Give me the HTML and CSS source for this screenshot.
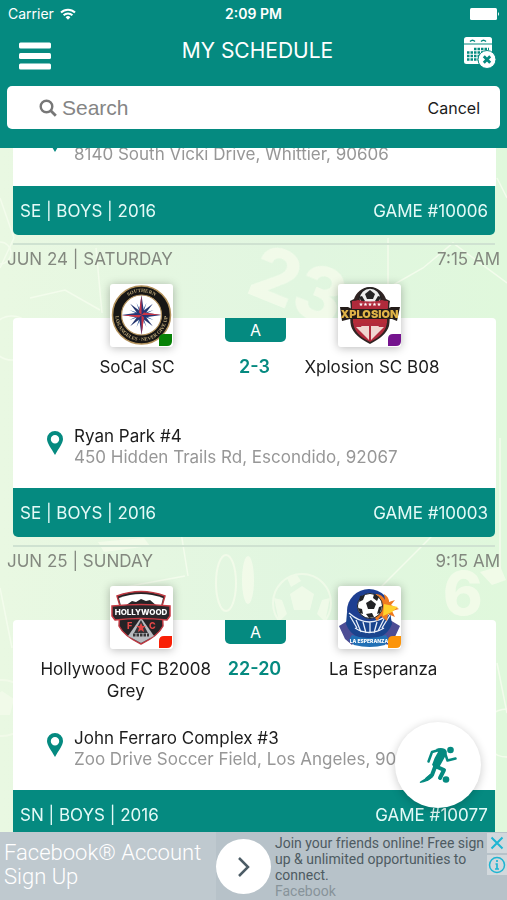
FILE: index.html
```html
<!DOCTYPE html>
<html lang="en">
<head>
<meta charset="utf-8">
<meta name="viewport" content="width=device-width, initial-scale=1">
<title>My Schedule</title>
<link rel="stylesheet" href="styles.css">
</head>
<body>
<header class="header">
  <div class="status">
    <div class="carrier">Carrier
      <svg width="16" height="12" viewBox="0 0 16 12" aria-hidden="true"><g fill="none" stroke="#fff" stroke-width="2"><path d="M1 4.5a10 10 0 0 1 14 0"/><path d="M3.6 7.3a6.2 6.2 0 0 1 8.8 0"/></g><path d="M5.6 9.2a3.4 3.4 0 0 1 4.8 0L8 11.8z" fill="#fff"/></svg>
    </div>
    <div class="clock">2:09 PM</div>
    <div class="battery"><svg width="30" height="12" viewBox="0 0 30 12" aria-hidden="true"><rect width="27" height="12" rx="1.5" fill="#fff"/><path d="M28 4q2 2 0 4z" fill="#fff"/></svg></div>
  </div>
  <div class="titlebar">
    <button class="icon-button" type="button" aria-label="Menu"><svg width="32" height="28" viewBox="0 0 32 28"><g fill="#fff"><rect y="0.5" width="32" height="6" rx="1.5"/><rect y="11" width="32" height="6" rx="1.5"/><rect y="21.500" width="32" height="6" rx="1.5"/></g></svg></button>
    <h1 class="title">MY SCHEDULE</h1>
    <button class="icon-button icon-button--end" type="button" aria-label="Clear calendar">
      <svg width="32" height="32" viewBox="0 0 32 32">
        <rect x="0" y="0" width="28" height="27" rx="2.500" fill="#fff"/>
        <path d="M0 7h28" stroke="#058a80" stroke-width="1"/>
        <path d="M6 4.500q2.500-2.500 5 0M17 4.500q2.500-2.500 5 0" fill="none" stroke="#058a80" stroke-width="1.400"/>
        <path d="M10 12h15M3 15.500h22M3 19h13M3 22.500h12" stroke="#058a80" stroke-width="2.400" stroke-dasharray="2.500 1"/>
        <circle cx="23" cy="22.500" r="9" fill="#fff" stroke="#058a80"/>
        <path d="M19.800 19.300l6.400 6.400m0-6.400l-6.400 6.400" stroke="#058a80" stroke-width="2.800"/>
      </svg>
    </button>
  </div>
  <form class="search">
    <label class="search-label" for="q"><svg width="18" height="18" viewBox="0 0 18 18" aria-hidden="true"><circle cx="7.500" cy="7.500" r="5.800" fill="none" stroke="#777" stroke-width="2.400"/><path d="M11.800 11.800l5 5" stroke="#777" stroke-width="2.800"/></svg></label>
    <input class="search-input" id="q" type="text" placeholder="Search" aria-label="Search">
    <button class="cancel" type="button">Cancel</button>
  </form>
</header>

<main class="main">
  <svg class="backdrop" viewBox="0 0 507 684" preserveAspectRatio="xMidYMin slice" aria-hidden="true">
    <g fill="none" stroke="#f3fcec" stroke-width="1.500">
      <path d="M0 50l14 40-14 30M30 150l35-8 35 20M96 100l6 65M388 90v50l35-20 30-25 54 40M497 30l10 20M120 440l65-12M180 378l8 50M380 440l60-60M500 290v130M0 440l12 60M497 515l10 50"/>
      <circle cx="0" cy="105" r="11"/><circle cx="12" cy="190" r="22"/><circle cx="507" cy="585" r="24"/>
    </g>
    <g fill="#f5fcec" opacity=".8">
      <text class="shirt-number" x="244" y="144" transform="rotate(22 244 144)">23</text>
      <text class="shirt-number shirt-number--small" x="443" y="467">6</text>
      <path d="M480 424l20-6 6 14-14 5z"/>
      <path d="M98 394l46-4 6 8-46 6z"/>
      <ellipse cx="226" cy="435" rx="10" ry="28" fill="none" stroke="#f5fcec" stroke-width="2"/>
      <ellipse cx="248" cy="432" rx="6" ry="24"/>
    </g>
    <g transform="translate(302 455)" fill="#f5fcec" opacity=".7"><circle r="29" fill="none" stroke="#f5fcec" stroke-width="2"/><path d="M-12-9L0-17 12-9 8 7-8 7zM-28-5l8 2 5 14-8 8zM28-5l-8 2-5 14 8 8zM-15-25l10-3 4 6-10 6zM15-25l-10-3"/></g>
    <g transform="translate(2 560)" fill="#f5fcec" opacity=".7"><circle r="28" fill="none" stroke="#f5fcec" stroke-width="2"/><path d="M-12-9L0-17 12-9 8 7-8 7z"/></g>
  </svg>

  <div class="list">
    <article class="game">
      <div class="card card--cut">
        <div class="location">
          <svg class="pin" width="16" height="24" viewBox="0 0 16 24" aria-hidden="true"><path fill-rule="evenodd" d="M8 0a8 8 0 0 1 8 8c0 4-4 9-8 16C4 17 0 12 0 8a8 8 0 0 1 8-8zm0 4a4.200 4.200 0 1 0 0 8.400A4.200 4.200 0 0 0 8 4z"/></svg>
          <div class="address">8140 South Vicki Drive, Whittier, 90606</div>
        </div>
      </div>
      <footer class="bar"><span>SE | BOYS | 2016</span><span>GAME #10006</span></footer>
    </article>

    <article class="game">
      <div class="when"><span>JUN 24 | SATURDAY</span><span>7:15 AM</span></div>
      <div class="card">
        <div class="crests">
          <div class="crest">
            <svg viewBox="0 0 63 63" role="img" aria-label="SoCal SC crest">
              <circle cx="31.500" cy="31" r="29" fill="#171615" stroke="#b3925c" stroke-width="1.500"/>
              <circle cx="31.500" cy="31" r="20" fill="#fff" stroke="#b3925c" stroke-width="1.200"/>
              <path id="ring-top" d="M8.500 31a23 23 0 0 1 46 0" fill="none"/>
              <path id="ring-low" d="M5.500 31a26 26 0 0 0 52 0" fill="none"/>
              <text class="ring-text"><textPath href="#ring-top" startOffset="50%" text-anchor="middle">SOUTHERN</textPath></text>
              <text class="ring-text"><textPath href="#ring-low" startOffset="50%" text-anchor="middle">LOS ANGELES · NEVER GIVE UP</textPath></text>
              <g transform="translate(31.500 31)">
                <path d="M0-13L1 0 0 13-1 0zM13 0L0 1-13 0 0-1z" transform="rotate(22.500)" fill="#35609f"/>
                <path d="M0-13L1 0 0 13-1 0zM13 0L0 1-13 0 0-1z" transform="rotate(67.500)" fill="#35609f"/>
                <path d="M0-16L2-2 0 0-2-2zM0 16L2 2 0 0-2 2zM16 0L2 2 0 0 2-2zM-16 0L-2 2 0 0-2-2z" transform="rotate(45)" fill="#25366f"/>
                <path d="M0-20L2.500-2.500 20 0 2.500 2.500 0 20-2.500 2.500-20 0-2.500-2.500z" fill="#273575"/>
                <path d="M0-20V0L-2.500-2.500zM20 0H0L2.500-2.500zM0 20V0L2.500 2.500zM-20 0H0L-2.500 2.500z" fill="#ca3545"/>
              </g>
              <path d="M49 62v-7q0-5 5-5h8v7q0 5-5 5z" fill="#078207"/>
            </svg>
          </div>
          <div class="badge">A</div>
          <div class="crest">
            <svg viewBox="0 0 63 63" role="img" aria-label="Xplosion crest">
              <path d="M32 3c8 0 14 6 16 12l4 2c-2 8 1 15-1 25-2 7-9 13-19 18C22 55 15 49 13 42c-2-10 1-17-1-25l4-2C18 9 24 3 32 3z" fill="#302423"/>
              <circle cx="32" cy="15" r="11" fill="#eee" stroke="#242122" stroke-width="1.500"/>
              <path d="M27 10l5-4 5 4-2 5h-6zM21 13l3-1 3 5-3 2zM43 13l-3-1-3 5 3 2z" fill="#252425"/>
              <path d="M14 17q4 0 6-1 12 3 24 0 2 1 6 1v8H14z" fill="#af2a3b"/>
              <path d="M15 36h34c0 11-7 17-17 22-10-5-17-11-17-22z" fill="#b12b3c"/>
              <path d="M18 43l13 13-4-14zM23 42l8 14v-14zM33 42v14l8-14zM37 42l-4 14 13-13z" fill="#f0d7d1"/>
              <path d="M2 23h8l4 2h35l4-2h9l-3 14-5-2-42 0-8 2z" fill="#241c19"/>
              <path d="M15 35h34v4H15z" fill="#b62c38"/>
              <text class="logo-xplosion" x="31.500" y="34" text-anchor="middle">XPLOSION</text>
              <text class="stars" x="32" y="22" text-anchor="middle">★★★★★</text>
              <path d="M50 62v-7q0-5 5-5h8v7q0 5-5 5z" fill="#75148e"/>
            </svg>
          </div>
        </div>
        <div class="teams"><h2 class="team">SoCal SC</h2><div class="score">2-3</div><h2 class="team">Xplosion SC B08</h2></div>
        <div class="location">
          <svg class="pin" width="16" height="24" viewBox="0 0 16 24" aria-hidden="true"><path fill-rule="evenodd" d="M8 0a8 8 0 0 1 8 8c0 4-4 9-8 16C4 17 0 12 0 8a8 8 0 0 1 8-8zm0 4a4.200 4.200 0 1 0 0 8.400A4.200 4.200 0 0 0 8 4z"/></svg>
          <div><div class="venue">Ryan Park #4</div><div class="address">450 Hidden Trails Rd, Escondido, 92067</div></div>
        </div>
      </div>
      <footer class="bar"><span>SE | BOYS | 2016</span><span>GAME #10003</span></footer>
    </article>

    <article class="game">
      <div class="when"><span>JUN 25 | SUNDAY</span><span>9:15 AM</span></div>
      <div class="card">
        <div class="crests">
          <div class="crest">
            <svg viewBox="0 0 63 63" role="img" aria-label="Hollywood FC crest">
              <path d="M7 10q24-9 48 0l-3 10 1 20q-5 10-22 18Q14 50 9 40l1-20z" fill="#252326" stroke="#bd3841" stroke-width="1.500"/>
              <path d="M9 12q22-8 44 0l-2 8H11z" fill="#fff"/>
              <path d="M15 20l7-5 4 1 5-3 5 2 4-1 7 6z" fill="#252326"/>
              <path d="M30 33L18 50l13 7 13-7-12-17z" fill="#b9bbc0"/>
              <path d="M31 34l-7 13h14z" fill="#343438"/>
              <path d="M2 20q29-3 58 0v10l-3 4q-26-3-52 0l-3-4z" fill="#29262a" stroke="#c83b44" stroke-width="1.500"/>
              <text class="logo-hollywood" x="31" y="29" text-anchor="middle">HOLLYWOOD</text>
              <text class="logo-fc" x="17" y="43">F</text><text class="logo-fc" x="39" y="43">C</text>
              <path d="M31 37l1.500 3h3.500l-3 2 1 4-3-2-3 2 1-4-3-2h3.500z" fill="#e24646"/>
              <path d="M23 49h16" stroke="#363638" stroke-width="3" stroke-dasharray="2.500 1"/>
              <path d="M49 62v-7q0-5 5-5h8v7q0 5-5 5z" fill="#f92006"/>
            </svg>
          </div>
          <div class="badge">A</div>
          <div class="crest">
            <svg viewBox="0 0 63 63" role="img" aria-label="La Esperanza crest">
              <path d="M1 40l10-6 12 14-9 11-7-6zM62 40l-10-6-12 14 9 11 7-6z" fill="#4d4d94"/>
              <circle cx="31" cy="25" r="22" fill="#1e3f91"/>
              <path d="M9 26q20 18 43 0l2 12q-6 15-23 15T8 38z" fill="#19448e"/>
              <path d="M12 30l7 12M18 34l5 12M25 36l3 11M32 36v11M39 36l-3 11M46 33l-6 12M52 29l-8 13M11 27q20 18 41 0M17 42q14 9 29 0" stroke="#e8effa" fill="none" stroke-width="1.300"/>
              <path d="M38 8q6 0 9 6l-1-6q5 3 5 8l6-2-4 5 8 4-7 2 3 6-7-3-1 7-6-5-4 5-5-8z" fill="#ef7b20"/>
              <path d="M46 18l14 3-6 5-9 4z" fill="#ffd22c"/>
              <circle cx="32" cy="20" r="12.500" fill="#fff" stroke="#202226"/>
              <path d="M28 17l5-3 5 4-2 5h-6zM22 10l5-1-2 5-4 2zM36 8l5 3-2 4-4-3zM20 22l4 1 1 5-3-1zM41 21l3-1-2 7-3 1zM28 28l6-1 2 4-5 1z" fill="#222326"/>
              <path d="M14 49q16 6 34 0l3 5-4 5q-15 4-31 0l-5-5z" fill="#2170b5"/>
              <text class="logo-esperanza" x="31" y="57" text-anchor="middle">LA ESPERANZA</text>
              <path d="M50 62v-7q0-5 5-5h8v7q0 5-5 5z" fill="#fc9409"/>
            </svg>
          </div>
        </div>
        <div class="teams"><h2 class="team">Hollywood FC B2008 Grey</h2><div class="score">22-20</div><h2 class="team">La Esperanza</h2></div>
        <div class="location">
          <svg class="pin" width="16" height="24" viewBox="0 0 16 24" aria-hidden="true"><path fill-rule="evenodd" d="M8 0a8 8 0 0 1 8 8c0 4-4 9-8 16C4 17 0 12 0 8a8 8 0 0 1 8-8zm0 4a4.200 4.200 0 1 0 0 8.400A4.200 4.200 0 0 0 8 4z"/></svg>
          <div><div class="venue">John Ferraro Complex #3</div><div class="address">Zoo Drive Soccer Field, Los Angeles, 900</div></div>
        </div>
      </div>
      <footer class="bar"><span>SN | BOYS | 2016</span><span>GAME #10077</span></footer>
    </article>
  </div>

  <button class="fab" type="button" aria-label="Games">
    <svg width="38" height="38" viewBox="0 0 38 38">
      <circle cx="31.500" cy="4" r="3.300" fill="#058a80"/><circle cx="27" cy="33.500" r="3.300" fill="#058a80"/>
      <path d="M17 3q5-2 9 0 3 2 1 6l-5 9q-1 3-4 5l-5-4q2-7 6-13z" fill="#058a80"/>
      <g fill="none" stroke="#058a80" stroke-linecap="round" stroke-linejoin="round">
        <path d="M9.500 15.500L13 6l7-2" stroke-width="2.500"/>
        <path d="M26 7l2.500 7.500 8-2" stroke-width="2.500"/>
        <path d="M16 20l9 4-4 8" stroke-width="4"/>
        <path d="M16 21l-3 8-5 4" stroke-width="4"/>
      </g>
      <path d="M11 28l3 3q-5 5-13 6-1-1 1-2 5-2 9-7z" fill="#058a80"/>
    </svg>
  </button>
</main>

<aside class="ad">
  <a class="ad-title" href="#">Facebook® Account Sign Up</a>
  <a class="ad-go" href="#" aria-label="Open"><svg width="14" height="22" viewBox="0 0 14 22"><path d="M2 2l9 9-9 9" fill="none" stroke="#4c5c66" stroke-width="2.500"/></svg></a>
  <div class="ad-copy"><p>Join your friends online! Free sign up &amp; unlimited opportunities to connect.</p><p class="ad-brand">Facebook</p></div>
  <div class="ad-tools">
    <button class="ad-tool" type="button" aria-label="Close ad"><svg width="14" height="14" viewBox="0 0 14 14"><path d="M1.500 1.500l11 11m0-11l-11 11" stroke="#1fb5d2" stroke-width="2"/></svg></button>
    <button class="ad-tool" type="button" aria-label="Ad information"><svg width="18" height="18" viewBox="0 0 18 18"><circle cx="9" cy="9" r="7.500" fill="none" stroke="#1fb5d2" stroke-width="1.500"/><path d="M9 4v2M7.500 8H9v5m-2 0h4" fill="none" stroke="#1fb5d2" stroke-width="1.700"/></svg></button>
  </div>
</aside>
</body>
</html>
```
FILE: styles.css
```css
:root {
  --teal: #058a80;
  --muted: #979797;
}

* { box-sizing: border-box; }

body {
  margin: 0;
  height: 100vh;
  display: flex;
  flex-direction: column;
  overflow: hidden;
  font: 17px/22px Inter, "Noto Sans", sans-serif;
  color: #1c1c1c;
}

h1, h2, p { margin: 0; font-weight: 400; }
svg { display: block; }

button {
  border: 0;
  padding: 0;
  background: none;
  font: inherit;
  color: inherit;
}

/* Header */
.header {
  background: var(--teal);
  color: #fff;
  padding: 0 7px 19px;
}

.status {
  display: grid;
  grid-template-columns: 1fr auto 1fr;
  align-items: center;
  height: 28px;
  font-size: 14px;
}

.carrier { display: flex; align-items: center; gap: 6px; padding-left: 1px; }
.clock { font-weight: 600; }
.battery { justify-self: end; }

.titlebar {
  display: grid;
  grid-template-columns: 1fr auto 1fr;
  align-items: center;
  height: 46px;
  padding: 0 4px 0 12px;
}

.icon-button { justify-self: start; padding-top: 10px; }
.icon-button--end { justify-self: end; padding-top: 4px; }
.title { font-size: 21px; }

.search {
  display: flex;
  align-items: center;
  gap: 5px;
  height: 43px;
  margin-top: 12px;
  padding: 0 20px 0 32px;
  border-radius: 5px;
  background: #fff;
}

.search-input {
  flex: 1;
  min-width: 0;
  border: 0;
  padding: 0;
  background: none;
  font: 21px "Liberation Sans", sans-serif;
}

.search-input::placeholder { color: #858585; opacity: 1; }
.cancel { color: #1c1c1c; font-size: 16px; }

/* Schedule */
.main {
  position: relative;
  flex: 1;
  min-height: 0;
  overflow: hidden;
  background: linear-gradient(90deg, #e9f8e2, #e1f6e0 60%, #e0f8dc);
}

.backdrop {
  position: absolute;
  inset: 0;
  width: 100%;
  height: 100%;
}

.shirt-number { font: 800 74px Inter, sans-serif; }
.shirt-number--small { font-size: 60px; }

.list { position: relative; margin-top: -25px; }

.game + .game::before {
  content: "";
  display: block;
  height: 2px;
  margin: 8px 12px 3px 13px;
  background: #cfe2d1;
}

.when {
  display: flex;
  justify-content: space-between;
  margin: 0 7px 48px;
  color: #83887f;
}

.card {
  margin: 0 11px 0 13px;
  padding-bottom: 20px;
  background: #fff;
  border-radius: 4px 4px 0 0;
}

.card--cut { padding-bottom: 21px; }

.crests {
  display: flex;
  justify-content: center;
  gap: 52px;
  padding-left: 2px;
}

.crest {
  width: 63px;
  height: 63px;
  margin-top: -34px;
  border-radius: 3px;
  background: #fff;
  box-shadow: 0 1px 10px rgba(0, 0, 0, .28);
}

.badge {
  width: 61px;
  height: 24px;
  border-radius: 0 0 5px 5px;
  background: var(--teal);
  color: #fff;
  font-size: 16px;
  line-height: 24px;
  text-align: center;
}

.teams {
  display: grid;
  grid-template-columns: minmax(0, 176px) auto minmax(0, 176px);
  justify-content: center;
  column-gap: 14px;
  min-height: 44px;
  margin-top: 9px;
  text-align: center;
}

.team { font-size: 17px; }
.score { color: var(--teal); font-size: 18px; font-weight: 600; }

.location {
  display: flex;
  align-items: flex-end;
  gap: 11px;
  min-height: 42px;
  padding-left: 34px;
  line-height: 21px;
  white-space: nowrap;
}

.card:not(.card--cut) .location { margin-top: 26px; }
.pin { align-self: flex-start; margin-top: 5px; fill: var(--teal); }
.address { color: var(--muted); }

.bar {
  display: flex;
  justify-content: space-between;
  align-items: center;
  height: 49px;
  margin: 0 12px 0 13px;
  padding: 0 7px;
  border-radius: 0 0 5px 5px;
  background: var(--teal);
  color: #e4faf7;
}

.fab {
  position: absolute;
  right: 26px;
  bottom: 24px;
  display: grid;
  place-items: center;
  width: 86px;
  height: 86px;
  border-radius: 50%;
  background: #fff;
  box-shadow: 0 2px 10px rgba(0, 0, 0, .2);
}

/* Crest lettering */
.ring-text { font: 700 5px "Liberation Serif", serif; fill: #bda879; }
.logo-xplosion { font: 900 11px Inter, sans-serif; fill: #e0b448; }
.stars { font: 5px "DejaVu Sans", sans-serif; fill: #fff; }
.logo-hollywood { font: 800 8px Inter, sans-serif; fill: #fff; }
.logo-fc { font: 800 9px Inter, sans-serif; fill: #e24646; }
.logo-esperanza { font: 800 5px Inter, sans-serif; fill: #fff; }

/* Ad banner */
.ad {
  position: relative;
  display: flex;
  height: 68px;
  background: #b7c2c9;
  font-family: Roboto, sans-serif;
}

.ad-title {
  width: 216px;
  padding: 9px 4px;
  background: #bfc9cf;
  color: #fff;
  font-size: 22px;
  font-weight: 300;
  line-height: 24px;
  text-decoration: none;
}

.ad-go {
  display: grid;
  place-items: center;
  flex: none;
  width: 55px;
  height: 55px;
  margin: 7px 4px 0 0;
  border-radius: 50%;
  background: #fff;
}

.ad-copy {
  flex: 1;
  min-width: 0;
  padding-top: 3px;
  color: #4e5b62;
  font-size: 14px;
  line-height: 16px;
}

.ad-brand { color: #87939a; }

.ad-tools {
  display: grid;
  align-content: start;
  gap: 2px;
  padding-top: 1px;
}

.ad-tool {
  display: grid;
  place-items: center;
  width: 20px;
  height: 20px;
  background: #d2d8dc;
}
```
